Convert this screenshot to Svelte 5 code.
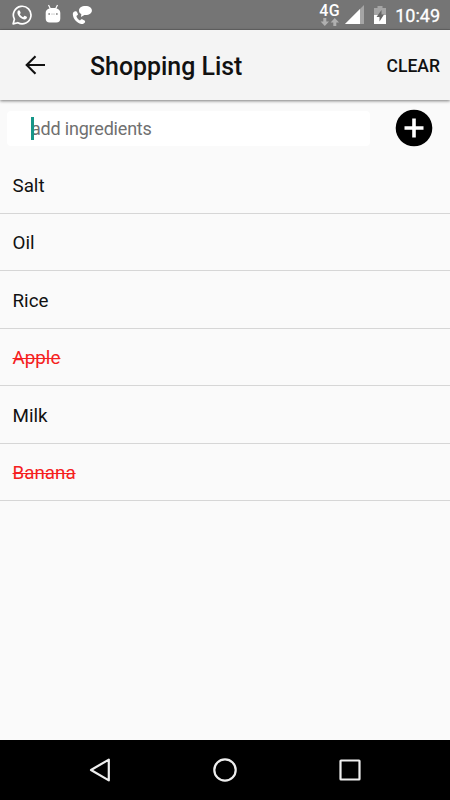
<script>
  let items = $state([
    { name: "Salt", done: false },
    { name: "Oil", done: false },
    { name: "Rice", done: false },
    { name: "Apple", done: true },
    { name: "Milk", done: false },
    { name: "Banana", done: true },
  ]);
  let draft = $state("");

  function addItem(e) {
    e.preventDefault();
    const name = draft.trim();
    if (!name) return;
    items.push({ name, done: false });
    draft = "";
  }

  function clearList() {
    items = [];
  }
</script>

<div class="screen">
  <div class="status">
    <div class="notifications">
      <!-- chat -->
      <svg width="20" height="20" viewBox="0 0 20 20">
        <path d="M1.1 18.9l1.3-4.7A8.8 8.8 0 1 1 5.8 17.7z" fill="none" stroke="#fff" stroke-width="1.7" stroke-linejoin="round" />
        <path d="M6.9 5.3c-.5 0-1.5.8-1.5 2.2 0 3.1 4 7 7.2 7 1.4 0 2.4-1 2.4-2.2 0-.4-2-1.5-2.5-1.5-.4 0-.9 1.4-1.4 1.4-.8 0-3-2-3.3-2.9 0-.4.9-.8.9-1.3 0-.4-.8-2.4-1.1-2.6z" fill="#fff" />
      </svg>
      <!-- robot head -->
      <svg class="robot" width="16" height="19" viewBox="0 0 16 19">
        <path d="M3.5 1l2 4M12.5 1l-2 4" stroke="#fff" stroke-width="1.2" />
        <path d="M.7 9C.7 5.5 3.5 4 8 4s7.3 1.5 7.3 5v5.5q0 4-4 4H4.700q-4 0-4-4z" fill="#fff" />
        <path d="M3.4 9.200h1.500v1.500H3.400zM11.100 9.200h1.500v1.500h-1.500z" fill="#757575" />
        <path d="M6 9.700h4v.7H6z" fill="#bbb" />
      </svg>
      <!-- call with message -->
      <svg class="call" width="21" height="20" viewBox="0 0 21 20">
        <path d="M13.5 1C9.3 1 7 2.8 7 5.5c0 1.7.9 2.9 2.3 3.6L9 12l3.400-2h1.100c4 0 6.400-1.800 6.400-4.500S17.500 1 13.500 1z" fill="#fff" />
        <path d="M2.5 6.5C1.2 7 .6 8.3.9 10c.7 4.500 4 8 8.300 8.900 1.500.3 3-.2 3.800-1.700.3-.7.1-1.200-.5-1.600l-2.300-1.300c-.5-.3-1-.1-1.300.3l-.9 1C6.300 14.600 4.900 13 4.400 11l1.200-.9c.4-.3.5-.7.3-1.200l-.9-2c-.4-.8-1.300-.9-2.500-.4z" fill="#fff" />
      </svg>
    </div>
    <div class="system">
      <div class="network">
        <span>4G</span>
        <svg width="20" height="8" viewBox="0 0 20 8">
          <path d="M3.3 0h3v3.500h2.700L4.800 8 .6 3.500h2.700zM13.300 8h3V4.500H19L14.800 0l-4.200 4.500h2.700z" fill="#b0b0b0" />
        </svg>
      </div>
      <svg class="signal" width="19" height="19" viewBox="0 0 19 19">
        <path d="M0 19L19 0v19z" fill="#a5a5a5" />
        <path d="M0 19L15 4V19z" fill="#fff" />
      </svg>
      <svg class="battery" width="12" height="18" viewBox="0 0 12 18">
        <path d="M3.5 0h5v2H12v7H0V2h3.500z" fill="#a5a5a5" />
        <path d="M0 9h12v9H0z" fill="#fff" />
        <path d="M7.500 4L2.500 11h3v4.500l4.500-7H7.500z" fill="#666" />
      </svg>
      <span class="clock">10:49</span>
    </div>
  </div>

  <header>
    <button class="back" aria-label="Back">
      <svg width="22" height="20" viewBox="0 0 22 20">
        <path d="M21 10H3M11.500 1.300L2.700 10l8.800 8.700" fill="none" stroke="#111" stroke-width="2.1" />
      </svg>
    </button>
    <h1>Shopping List</h1>
    <button class="clear" onclick={clearList}>CLEAR</button>
  </header>

  <form onsubmit={addItem}>
    <div class="field">
      <input placeholder="add ingredients" bind:value={draft} />
      <span class="caret"></span>
    </div>
    <button class="add" aria-label="Add">
      <svg width="38" height="38" viewBox="0 0 38 38">
        <circle cx="19" cy="19" r="18.300" fill="#000" />
        <path d="M19 9.500v19M9.500 19h19" stroke="#fff" stroke-width="3.6" />
      </svg>
    </button>
  </form>

  <ul>
    {#each items as item}
      <li class:done={item.done}>{item.name}</li>
    {/each}
  </ul>

  <nav>
    <svg width="24" height="26" viewBox="0 0 24 26">
      <path d="M20.800 2.600v20.800L3 13z" fill="none" stroke="#eee" stroke-width="2.2" stroke-linejoin="round" />
    </svg>
    <svg width="24" height="26" viewBox="0 0 24 26">
      <circle cx="12" cy="13" r="10.700" fill="none" stroke="#eee" stroke-width="2.2" />
    </svg>
    <svg width="24" height="26" viewBox="0 0 24 26">
      <rect x="2.500" y="3.500" width="19" height="19" rx=".5" fill="none" stroke="#eee" stroke-width="2.2" />
    </svg>
  </nav>
</div>

<style>
  :global(body) {
    background: #fafafa;
  }

  .screen {
    display: flex;
    flex-direction: column;
    height: 100vh;
    font-family: Roboto, "Liberation Sans", sans-serif;
    color: #111;
    background: #fafafa;
    overflow: hidden;
  }

  svg {
    display: block;
    flex: none;
  }

  button {
    padding: 0;
    border: 0;
    background: none;
    color: inherit;
    font: inherit;
    cursor: pointer;
  }

  .status {
    display: flex;
    justify-content: space-between;
    height: 30px;
    box-sizing: border-box;
    padding: 0 10px 0 12px;
    background: #757575;
    border-bottom: 1px solid #666;
    color: #fff;
  }

  .notifications,
  .system {
    display: flex;
    align-items: center;
  }

  .robot {
    margin: -3px 0 0 12.5px;
  }

  .call {
    margin-left: 11.5px;
  }

  .network {
    display: flex;
    flex-direction: column;
    align-items: center;
    margin-right: 5px;
  }

  .network span {
    font-size: 16px;
    font-weight: 500;
    line-height: 15px;
    letter-spacing: 0.5px;
  }

  .signal {
    margin-right: 10px;
  }

  .battery {
    margin-right: 9px;
  }

  .clock {
    font-size: 18px;
    font-weight: 400;
    line-height: 30px;
    margin-top: 2px;
    -webkit-text-stroke: 0.3px #fff;
  }

  header {
    position: relative;
    display: flex;
    align-items: center;
    height: 70px;
    flex: none;
    box-sizing: border-box;
    padding: 0 10px 0 24px;
    background: #f4f4f4;
    box-shadow: 0 1px 3px rgba(0, 0, 0, 0.5);
  }

  h1 {
    flex: 1;
    margin: 2px 0 0 44px;
    font-size: 24.9px;
    font-weight: 500;
  }

  .clear {
    margin-top: 1px;
    font-size: 17.5px;
    font-weight: 500;
  }

  form {
    display: flex;
    align-items: center;
    justify-content: space-between;
    height: 56px;
    flex: none;
    padding: 0 17px 0 7px;
  }

  .field {
    position: relative;
    width: 363px;
    height: 35px;
    background: #fff;
    border-radius: 4px;
  }

  input {
    width: 100%;
    height: 100%;
    box-sizing: border-box;
    padding: 0 24px;
    border: 0;
    outline: none;
    background: none;
    font: 18px Roboto, "Liberation Sans", sans-serif;
    letter-spacing: -0.2px;
  }

  input::placeholder {
    color: #707070;
  }

  .caret {
    position: absolute;
    left: 24px;
    top: 6px;
    width: 2.5px;
    height: 23px;
    background: #159688;
  }

  ul {
    flex: 1;
    margin: 0;
    padding: 0;
    list-style: none;
  }

  li {
    height: 57.5px;
    box-sizing: border-box;
    padding: 1.5px 12.5px 0;
    border-bottom: 1px solid #d6d6d6;
    font-size: 18.8px;
    line-height: 56px;
  }

  .done {
    color: #f52020;
    text-decoration: line-through;
    text-decoration-thickness: 1px;
  }

  nav {
    display: flex;
    align-items: center;
    justify-content: space-between;
    height: 60px;
    padding: 0 88px;
    background: #000;
  }
</style>
